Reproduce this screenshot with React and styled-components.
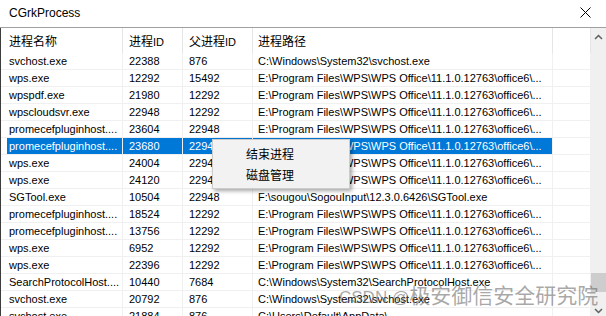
import React from 'react';
import styled, { createGlobalStyle } from 'styled-components';

const GlobalStyle = createGlobalStyle`
  html, body {
    margin: 0;
    padding: 0;
    background: #fff;
    overflow: hidden;
  }
  body {
    font-family: "Liberation Sans", "Noto Sans CJK SC", sans-serif;
    font-size: 11px;
    color: #000;
  }
`;

const Window = styled.div`
  position: relative;
  width: 606px;
  height: 319px;
  display: flex;
  flex-direction: column;
  background: #fff;
  overflow: hidden;
`;

const TitleBar = styled.div`
  flex: none;
  height: 28px;
  box-sizing: border-box;
  display: flex;
  align-items: center;
  justify-content: space-between;
  padding: 0 15px 2px 9px;
  border-bottom: 1px solid #a0a0a0;
  font-size: 12px;
`;

const Han = styled.span`
  font-family: "Noto Sans CJK SC", sans-serif;
  font-size: ${(p) => p.$size || 12}px;
`;

const Body = styled.div`
  flex: 1;
  min-height: 0;
  display: flex;
  border-left: 1px solid #3c3c3c;
`;

const List = styled.div`
  flex: none;
  display: grid;
  grid-template-columns: 122px 60px 70px 300px 38px;
  grid-template-rows: 25px;
  grid-auto-rows: 17px;
  align-content: start;
`;

const HeadCell = styled.div`
  box-sizing: border-box;
  border-right: 1px solid #e5e5e5;
  padding-left: ${(p) => p.$pad}px;
  line-height: 25px;
  white-space: nowrap;
  overflow: hidden;
`;

const Cell = styled.div`
  box-sizing: border-box;
  border-right: 1px solid #f0f0f0;
  border-bottom: 1px solid #f0f0f0;
  padding-left: ${(p) => p.$pad}px;
  line-height: 16px;
  white-space: nowrap;
  overflow: hidden;
  background: ${(p) => (p.$selected ? '#0078d7' : '#fff')};
  color: ${(p) => (p.$selected ? '#fff' : '#000')};
  box-shadow: ${(p) => (p.$selected && p.$first ? 'inset 6px 0 0 #fff' : 'none')};
`;

const ScrollBar = styled.div`
  flex: none;
  width: 15px;
  background: #f0f0f0;
  display: flex;
  flex-direction: column;
`;

const ScrollButton = styled.div`
  flex: none;
  height: 17px;
  display: flex;
  align-items: center;
  justify-content: center;
`;

const Track = styled.div`
  flex: 1;
  display: flex;
  flex-direction: column;
  justify-content: flex-end;
  padding-bottom: 10px;
`;

const Thumb = styled.div`
  height: 19px;
  background: #cdcdcd;
`;

const Menu = styled.div`
  position: absolute;
  left: 212px;
  top: 139px;
  width: 138px;
  box-sizing: border-box;
  padding: 3px 0;
  background: #f2f2f2;
  border: 1px solid #cccccc;
  box-shadow: 2px 2px 4px rgba(0, 0, 0, 0.35);
`;

const MenuItem = styled.div`
  height: 21px;
  line-height: 21px;
  padding-left: 33px;
  font-family: "Noto Sans CJK SC", sans-serif;
  font-size: 12px;
`;

const Watermark = styled.div`
  position: absolute;
  left: 339px;
  top: 281px;
  font-size: 17px;
  line-height: 26px;
  color: rgba(110, 110, 110, 0.6);
  white-space: nowrap;
  pointer-events: none;
`;

const WPS = 'E:\\Program Files\\WPS\\WPS Office\\11.1.0.12763\\office6\\...';
const PROME = 'promecefpluginhost....';

const rows = [
  ['svchost.exe', '22388', '876', 'C:\\Windows\\System32\\svchost.exe'],
  ['wps.exe', '12292', '15492', WPS],
  ['wpspdf.exe', '21980', '12292', WPS],
  ['wpscloudsvr.exe', '22948', '12292', WPS],
  [PROME, '23604', '22948', WPS],
  [PROME, '23680', '22948', WPS],
  ['wps.exe', '24004', '22948', WPS],
  ['wps.exe', '24120', '22948', WPS],
  ['SGTool.exe', '10504', '22948', 'F:\\sougou\\SogouInput\\12.3.0.6426\\SGTool.exe'],
  [PROME, '18524', '12292', WPS],
  [PROME, '13756', '12292', WPS],
  ['wps.exe', '6952', '12292', WPS],
  ['wps.exe', '22396', '12292', WPS],
  ['SearchProtocolHost....', '10440', '7684', 'C:\\Windows\\System32\\SearchProtocolHost.exe'],
  ['svchost.exe', '20792', '876', 'C:\\Windows\\System32\\svchost.exe'],
  ['svchost.exe', '21884', '876', 'C:\\Users\\Default\\AppData\\...'],
];

const headers = [
  <Han>进程名称</Han>,
  <><Han>进程</Han>ID</>,
  <><Han>父进程</Han>ID</>,
  <Han>进程路径</Han>,
  '',
];
const pads = [8, 6, 6, 5, 0];
const SELECTED = 5;

function Chevron({ down }) {
  return (
    <svg width="9" height="6" viewBox="0 0 9 6">
      <polyline
        points={down ? '1,1 4.5,4.5 8,1' : '1,5 4.5,1.5 8,5'}
        fill="none"
        stroke="#606060"
        strokeWidth="1.5"
      />
    </svg>
  );
}

export default function App() {
  return (
    <>
      <GlobalStyle />
      <Window>
        <TitleBar>
          <span>CGrkProcess</span>
          <svg width="11" height="11" viewBox="0 0 11 11">
            <path d="M0.5 0.5 L10.5 10.5 M10.5 0.5 L0.5 10.5" stroke="#000" strokeWidth="1" />
          </svg>
        </TitleBar>
        <Body>
          <List>
            {headers.map((h, i) => (
              <HeadCell key={i} $pad={pads[i]}>
                {h}
              </HeadCell>
            ))}
            {rows.map((row, r) =>
              [...row, ''].map((v, c) => (
                <Cell
                  key={`${r}-${c}`}
                  $pad={pads[c]}
                  $first={c === 0}
                  $selected={r === SELECTED && c < 4}
                >
                  {v}
                </Cell>
              ))
            )}
          </List>
          <ScrollBar>
            <ScrollButton>
              <Chevron />
            </ScrollButton>
            <Track>
              <Thumb />
            </Track>
            <ScrollButton>
              <Chevron down />
            </ScrollButton>
          </ScrollBar>
        </Body>
        <Menu>
          <MenuItem>结束进程</MenuItem>
          <MenuItem>磁盘管理</MenuItem>
        </Menu>
        <Watermark>
          CSDN @<Han $size={21}>极安御信安全研究院</Han>
        </Watermark>
      </Window>
    </>
  );
}
